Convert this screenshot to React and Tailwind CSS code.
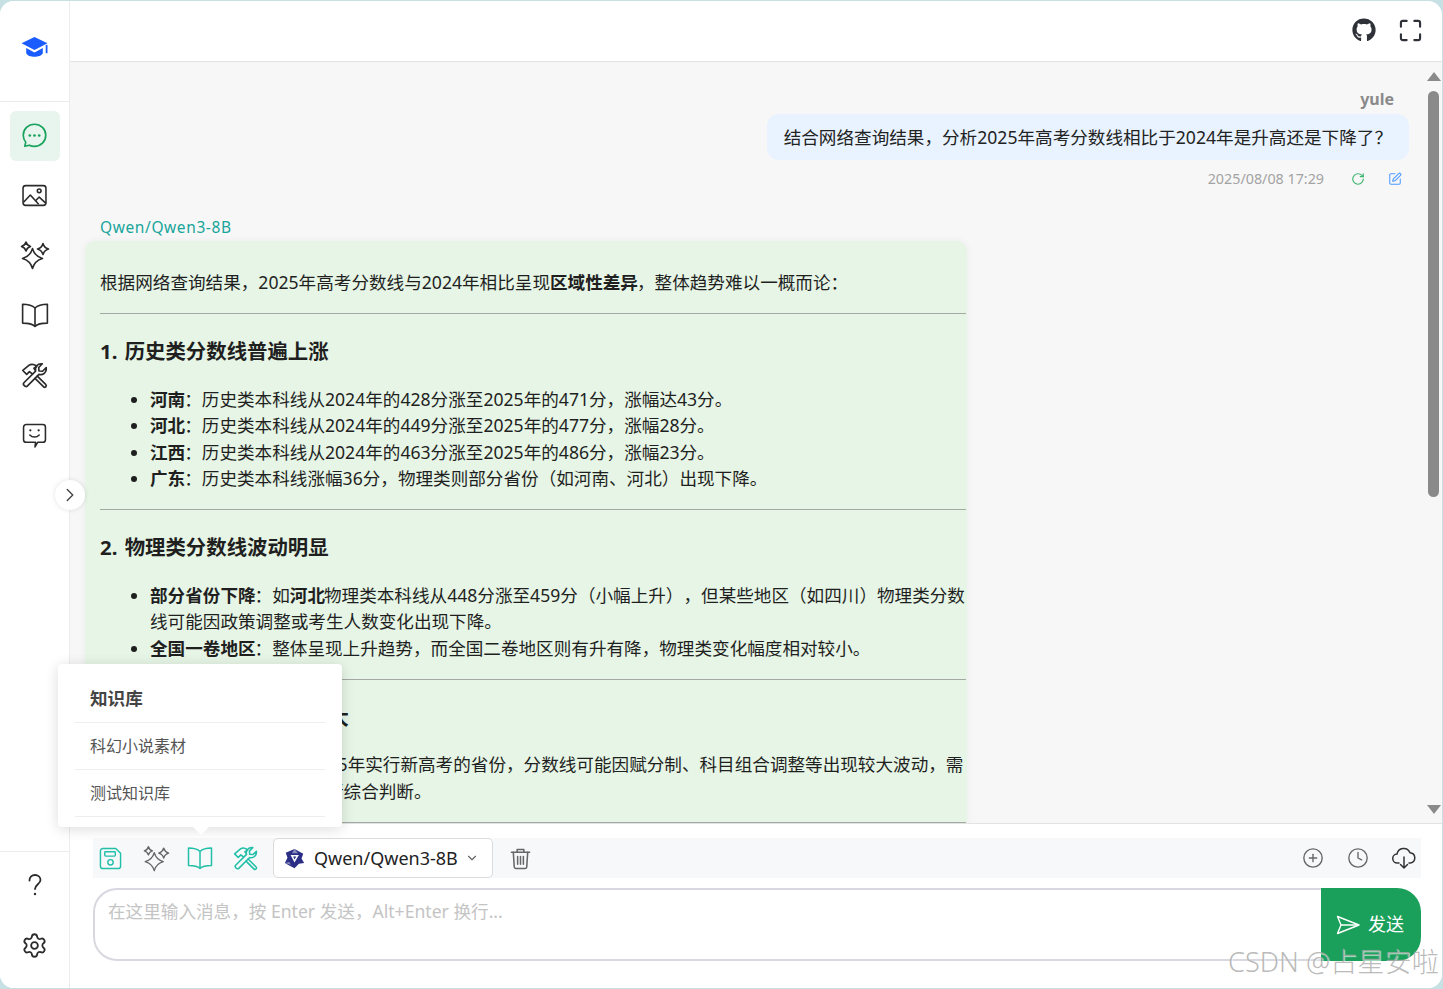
import React from 'react';
import { FaGithub } from 'react-icons/fa';
import { ChevronDown, ChevronRight, CirclePlus, Clock, RotateCw, Settings, SquarePen } from 'lucide-react';

const font = { fontFamily: '"Noto Sans", "Noto Sans CJK SC", sans-serif' };

function star(x, y, r) {
    const c = r * 0.22;
    return `M${x} ${y - r}Q${x + c} ${y - c} ${x + r} ${y}Q${x + c} ${y + c} ${x} ${y + r}Q${x - c} ${y + c} ${x - r} ${y}Q${x - c} ${y - c} ${x} ${y - r}Z`;
}

function CapIcon({ className }) {
    return (
        <svg viewBox="0 0 26 22" fill="currentColor" className={className}>
            <path d="M13 1 25.500 7 13 13.500.5 7z" />
            <path d="M5 11.500 13 15.800l8-4.300v5c-2 4.500-14 4.500-16 0z" />
            <rect x="23.800" y="8.500" width="1.700" height="8" />
        </svg>
    );
}

function ChatIcon({ className }) {
    return (
        <svg viewBox="0 0 24 24" fill="none" stroke="currentColor" strokeWidth="1.600" className={className}>
            <path d="M12 1.200c6 0 10.800 4.600 10.800 10.600S18 22.400 12 22.400c-1.800 0-3.500-.4-5-1.100l-4.300 1 .9-3.900A10.500 10.500 0 0 1 1.200 11.800C1.200 5.800 6 1.200 12 1.200z" strokeLinejoin="round" />
            <circle cx="7.500" cy="12" r="1.300" fill="currentColor" stroke="none" />
            <circle cx="12" cy="12" r="1.300" fill="currentColor" stroke="none" />
            <circle cx="16.500" cy="12" r="1.300" fill="currentColor" stroke="none" />
        </svg>
    );
}

function ImageIcon({ className }) {
    return (
        <svg viewBox="0 0 24 24" fill="none" stroke="currentColor" strokeWidth="1.500" strokeLinejoin="round" className={className}>
            <rect x="1" y="2.500" width="22" height="19" rx="2.500" />
            <path d="M1.500 18.500 8 11.500l8 9" />
            <path d="m13 17 3.500-3.500 6.500 6" />
            <circle cx="16.500" cy="7.500" r="1.800" />
        </svg>
    );
}

function SparkIcon({ className }) {
    return (
        <svg viewBox="0 0 30 30" fill="none" stroke="currentColor" strokeWidth="1.600" strokeLinejoin="round" className={className}>
            <path d={star(12.500, 18.500, 10)} />
            <path d={star(6, 6.500, 4.500)} />
            <path d={star(23, 9, 5.500)} />
        </svg>
    );
}

function BookIcon({ className }) {
    return (
        <svg viewBox="0 0 26 24" fill="none" stroke="currentColor" strokeWidth="1.500" strokeLinejoin="round" className={className}>
            <path d="M13 5.500C11 3.500 7.500 2 1.500 2v17.500c6 0 9.500 1 11.500 3 2-2 5.500-3 11.500-3V2C18.500 2 15 3.500 13 5.500z" />
            <path d="M13 5.500v17" />
        </svg>
    );
}

function ToolsIcon({ className }) {
    return (
        <svg viewBox="0 0 26 26" fill="none" stroke="currentColor" strokeWidth="1.500" strokeLinejoin="round" strokeLinecap="round" className={className}>
            <path d="M3.500 19.500 14 9C13 5.500 15.500 2 20 2.500l-3.200 3.300.2 3.200 3.200.2L23.500 6c.5 4.500-3 7-6.500 6L6.500 22.500c-1.500 1.500-4.500-1.500-3-3z" />
            <path d="M11 11.500 8.500 9.500 6 12 2.500 8.500 8.500 3.500c2-1 5-.5 6.500 1.500l-2.500 1.500L13.500 8" />
            <path d="M15.500 13.500 23 21c1.500 1.500-.5 3.500-2 2l-7.500-7.500" />
        </svg>
    );
}

function FeedbackIcon({ className }) {
    return (
        <svg viewBox="0 0 24 24" fill="none" stroke="currentColor" strokeWidth="1.500" strokeLinejoin="round" strokeLinecap="round" className={className}>
            <path d="M4 1.500h16A2.500 2.500 0 0 1 22.500 4v12a2.500 2.500 0 0 1-2.500 2.500h-5L12.500 23l.5-4.500H4A2.500 2.500 0 0 1 1.500 16V4A2.500 2.500 0 0 1 4 1.500z" />
            <path d="M7.500 11.500c2.500 2.700 6.500 2.700 9 0" />
            <circle cx="8" cy="7" r="1.100" fill="currentColor" stroke="none" />
            <circle cx="16" cy="7" r="1.100" fill="currentColor" stroke="none" />
        </svg>
    );
}

function QuestionIcon({ className }) {
    return (
        <svg viewBox="0 0 24 24" fill="none" stroke="currentColor" strokeWidth="1.800" strokeLinecap="round" className={className}>
            <path d="M6.500 7.500C6.500 4 9 2 12 2s5.500 2 5.500 5c0 4-5.500 4.500-5.500 9" />
            <circle cx="12" cy="21" r="1.200" fill="currentColor" stroke="none" />
        </svg>
    );
}

function FullscreenIcon({ className }) {
    return (
        <svg viewBox="0 0 24 24" fill="none" stroke="currentColor" strokeWidth="2.200" strokeLinecap="round" className={className}>
            <path d="M2 8V4a2 2 0 0 1 2-2h4M16 2h4a2 2 0 0 1 2 2v4M22 16v4a2 2 0 0 1-2 2h-4M8 22H4a2 2 0 0 1-2-2v-4" />
        </svg>
    );
}

function SaveIcon({ className }) {
    return (
        <svg viewBox="0 0 24 24" fill="none" stroke="currentColor" strokeWidth="1.500" strokeLinejoin="round" className={className}>
            <path d="M4 1.500h13.500l5 5V20a2.500 2.500 0 0 1-2.500 2.500H4A2.500 2.500 0 0 1 1.500 20V4A2.500 2.500 0 0 1 4 1.500z" />
            <rect x="6" y="5" width="11" height="4.500" rx=".8" />
            <circle cx="12" cy="16" r="2.800" />
        </svg>
    );
}

function TrashIcon({ className }) {
    return (
        <svg viewBox="0 0 24 24" fill="none" stroke="currentColor" strokeWidth="1.600" strokeLinecap="round" strokeLinejoin="round" className={className}>
            <path d="M2.500 5.500h19M8.500 5.500V2.500h7v3" />
            <path d="M4.500 5.500 5.500 21a1.800 1.800 0 0 0 1.800 1.500h9.400a1.800 1.800 0 0 0 1.800-1.500l1-15.500" />
            <path d="M9 10v8M12 10v8M15 10v8" />
        </svg>
    );
}

function CloudIcon({ className }) {
    return (
        <svg viewBox="0 0 24 24" fill="none" stroke="currentColor" strokeWidth="1.500" strokeLinecap="round" strokeLinejoin="round" className={className}>
            <path d="M7 17H5.500a4.500 4.500 0 0 1-.5-9 6.800 6.800 0 0 1 13-1.300A5.200 5.200 0 0 1 18.500 17H17" />
            <path d="M12 11v11M8.500 18.500 12 22l3.500-3.500" />
        </svg>
    );
}

function SendIcon({ className }) {
    return (
        <svg viewBox="0 0 24 24" fill="none" stroke="currentColor" strokeWidth="1.400" strokeLinejoin="round" className={className}>
            <path d="M1.500 3.500 23 12 1.500 20.500 5 12z" />
            <path d="M5 12h18" />
        </svg>
    );
}

function QwenLogo({ className }) {
    return (
        <svg viewBox="0 0 24 24" className={className}>
            <path d="M12 1 22 6.500 20 12l3 5-6 1-5 5-6-3-5-3 3-6-2-5.500z" fill="#2a2e85" />
            <path d="M7.500 8h9.500L12 16.500z" fill="#fff" />
            <path d="M10.500 9.800h3.500L12 13z" fill="#2a2e85" />
            <path d="M12 1 9 6h7zM1 17l5-1 2 3z" fill="#fff" opacity=".45" />
        </svg>
    );
}

function NavItem({ children, active }) {
    return (
        <div className={active
            ? 'w-[50px] h-[50px] pb-[2px] rounded-md bg-[#e8f4ee] text-[#1aa35d] flex items-center justify-center'
            : 'w-[50px] h-[50px] pb-[2px] rounded-md text-[#2b2b2b] flex items-center justify-center'}>
            {children}
        </div>
    );
}

function Bold({ children }) {
    return <strong className="font-bold mr-[-1px]">{children}</strong>;
}

function Item({ label, children }) {
    return (
        <li>
            <Bold>{label}</Bold>：{children}
        </li>
    );
}

function Section({ title, children }) {
    return (
        <>
            <hr className="border-0 h-px bg-[#a3a8a3]" />
            <h3 className="mt-[22px] h-[31px] text-[20.4px] leading-[31px] font-bold [word-spacing:2px]">{title}</h3>
            <ul className="mt-[18.6px] mb-[17.6px] pl-[50px] list-disc">{children}</ul>
        </>
    );
}

export default function App() {
    return (
        <div style={font} className="relative w-[1443px] h-[989px] overflow-hidden bg-[#c6e0e4] pt-px pr-px pb-px">
            <div className="flex h-full bg-white rounded-[14px] overflow-hidden">
                {/* sidebar */}
                <aside className="w-[70px] shrink-0 border-r border-[#ececec] flex flex-col items-center bg-white">
                    <div className="w-full h-[101px] border-b border-[#ececec] flex justify-center pt-[35px]">
                        <CapIcon className="w-[27px] h-[23px] text-[#1a5cff]" />
                    </div>
                    <nav className="flex flex-col items-center gap-[10px] pt-[9px]">
                        <NavItem active><ChatIcon className="w-[25px] h-[25px]" /></NavItem>
                        <NavItem><ImageIcon className="w-[25px] h-[25px]" /></NavItem>
                        <NavItem><SparkIcon className="w-[30px] h-[30px]" /></NavItem>
                        <NavItem><BookIcon className="w-[28px] h-[26px]" /></NavItem>
                        <NavItem><ToolsIcon className="w-[29px] h-[29px]" /></NavItem>
                        <NavItem><FeedbackIcon className="w-[25px] h-[25px]" /></NavItem>
                    </nav>
                    <div className="mt-auto w-full border-t border-[#ececec] flex flex-col items-center gap-[10px] pt-[9px] pb-[17px]">
                        <NavItem><QuestionIcon className="w-[24px] h-[24px]" /></NavItem>
                        <NavItem><Settings className="w-[27px] h-[27px]" strokeWidth={1.6} /></NavItem>
                    </div>
                </aside>

                <main className="flex-1 min-w-0 flex flex-col">
                    {/* top bar */}
                    <header className="h-[61px] shrink-0 border-b border-[#e3e3e3] flex items-center justify-end gap-[23px] pr-[20px] pb-[2px]">
                        <FaGithub className="w-[24px] h-[24px] text-[#2e3138]" />
                        <FullscreenIcon className="w-[23px] h-[23px] text-[#2e3138]" />
                    </header>

                    <div className="flex-1 min-h-0 flex bg-[#f7f7f7]">
                        {/* messages */}
                        <div className="flex-1 min-w-0 overflow-hidden [text-spacing-trim:space-all]">
                            <div className="pt-[27px] pr-[28px] text-right text-[16px] leading-[20px] font-bold text-[#8a8a8a]">yule</div>
                            <div className="mt-[5px] mr-[13px] flex justify-end">
                                <div className="h-[46px] px-[17px] rounded-xl bg-[#e8f3ff] text-[17.6px] leading-[46px] text-[#222]">
                                    结合网络查询结果，分析2025年高考分数线相比于2024年是升高还是下降了？
                                </div>
                            </div>
                            <div className="mt-[10px] h-[18px] flex items-center justify-end pr-[20px] text-[14.3px] text-[#a3a3a3]">
                                <span>2025/08/08 17:29</span>
                                <RotateCw className="ml-[27px] w-[14px] h-[14px] text-[#3cb46e]" strokeWidth={2} />
                                <SquarePen className="ml-[23px] w-[14px] h-[14px] text-[#4d9bff]" strokeWidth={1.8} />
                            </div>

                            <div className="mt-[30px] pl-[30px] h-[18px] text-[15.5px] leading-[18px] tracking-[0.6px] text-[#18a59a]">Qwen/Qwen3-8B</div>
                            <div className="mt-[5px] ml-[15px] w-[882px] pt-[28px] pl-[15px] pr-px rounded-t-[10px] bg-[#e6f5e5] shadow-[0_0_8px_rgba(0,0,0,0.05)] text-[17.6px] leading-[26.4px] text-[#1f1f1f]">
                                <p className="mb-[18px]">根据网络查询结果，2025年高考分数线与2024年相比呈现<Bold>区域性差异</Bold>，整体趋势难以一概而论：</p>
                                <Section title="1. 历史类分数线普遍上涨">
                                    <Item label="河南">历史类本科线从2024年的428分涨至2025年的471分，涨幅达43分。</Item>
                                    <Item label="河北">历史类本科线从2024年的449分涨至2025年的477分，涨幅28分。</Item>
                                    <Item label="江西">历史类本科线从2024年的463分涨至2025年的486分，涨幅23分。</Item>
                                    <Item label="广东">历史类本科线涨幅36分，物理类则部分省份（如河南、河北）出现下降。</Item>
                                </Section>
                                <Section title="2. 物理类分数线波动明显">
                                    <li><Bold>部分省份下降</Bold>：如<Bold>河北</Bold>物理类本科线从448分涨至459分（小幅上升），但某些地区（如四川）物理类分数线可能因政策调整或考生人数变化出现下降。</li>
                                    <Item label="全国一卷地区">整体呈现上升趋势，而全国二卷地区则有升有降，物理类变化幅度相对较小。</Item>
                                </Section>
                                <Section title="3. 新高考省份分数波动较大">
                                    <Item label="政策影响">部分省份2025年实行新高考的省份，分数线可能因赋分制、科目组合调整等出现较大波动，需要结合当地招生政策进行综合判断。</Item>
                                </Section>
                                <hr className="border-0 h-px bg-[#a3a8a3]" />
                                <div className="h-[60px]" />
                            </div>
                        </div>

                        {/* scrollbar */}
                        <div className="w-[20px] shrink-0 pl-[3px] bg-[#f7f7f7] flex flex-col items-center">
                            <div className="mt-[10px] w-0 h-0 border-x-[7px] border-b-[9px] border-x-transparent border-b-[#8a8a8a]" />
                            <div className="mt-[10px] w-[11px] h-[406px] rounded-full bg-[#8a8a8a]" />
                            <div className="mt-auto mb-[9px] w-0 h-0 border-x-[7px] border-t-[9px] border-x-transparent border-t-[#8a8a8a]" />
                        </div>
                    </div>

                    {/* composer */}
                    <div className="h-[165px] shrink-0 border-t border-[#e3e3e3] bg-white pt-[14px] pl-[23px] pr-[21px]">
                        <div className="h-[40px] bg-[#f7f8fa] flex items-center text-[#666]">
                            <div className="w-[45px] pl-[6px]"><SaveIcon className="w-[23px] h-[23px] text-[#22bfa9]" /></div>
                            <div className="w-[45px] pl-[5px]"><SparkIcon className="w-[27px] h-[27px]" /></div>
                            <div className="w-[45px] pl-[4px]"><BookIcon className="w-[26px] h-[24px] text-[#22bfa9]" /></div>
                            <div className="w-[45px] pl-[4px]"><ToolsIcon className="w-[27px] h-[27px] text-[#22bfa9]" /></div>
                            <div className="w-[220px] h-[40px] rounded-[5px] border border-[#dcdcdc] bg-white flex items-center pl-[10px]">
                                <QwenLogo className="w-[21px] h-[21px]" />
                                <span className="ml-[9px] text-[18px] text-[#222]">Qwen/Qwen3-8B</span>
                                <ChevronDown className="ml-[7px] w-[14px] h-[14px] text-[#666]" />
                            </div>
                            <TrashIcon className="ml-[16px] w-[23px] h-[25px]" />
                            <div className="ml-auto flex items-center gap-[23px] pr-[5px]">
                                <CirclePlus className="w-[22px] h-[22px]" strokeWidth={1.500} />
                                <Clock className="w-[22px] h-[22px]" strokeWidth={1.500} />
                                <CloudIcon className="w-[24px] h-[24px] text-[#333]" />
                            </div>
                        </div>
                        <div className="mt-[10px] h-[73px] flex">
                            <div className="flex-1 border-2 border-r-0 border-[#d8d8e0] rounded-l-[24px] pl-[13px] pt-[8px] text-[17.6px] leading-[26px] text-[#c4c4c4]">
                                在这里输入消息，按 Enter 发送，Alt+Enter 换行...
                            </div>
                            <div className="w-[100px] h-[73px] rounded-r-[24px] bg-[#1aa05a] text-white flex items-center justify-center gap-[8px] pr-[2px] text-[18px]">
                                <SendIcon className="w-[24px] h-[24px]" />
                                <span>发送</span>
                            </div>
                        </div>
                    </div>
                </main>
            </div>

            {/* sidebar toggle */}
            <div className="absolute left-[55px] top-[480px] w-[30px] h-[30px] rounded-full bg-white shadow-[0_0_5px_rgba(0,0,0,0.12)] flex items-center justify-center text-[#444]">
                <ChevronRight className="w-[22px] h-[22px]" strokeWidth={1.500} />
            </div>

            {/* knowledge base popup */}
            <div className="absolute left-[58px] top-[664px] w-[284px] h-[163px] rounded-[4px] bg-white shadow-[0_2px_14px_rgba(0,0,0,0.14)] px-[17px]">
                <div className="h-[59px] border-b border-[#eeeeee] pl-[15px] pt-[21px] text-[17.6px] leading-[26px] font-bold text-[#444]">知识库</div>
                <div className="h-[47px] border-b border-[#eeeeee] pl-[15px] text-[16px] leading-[47px] text-[#555]">科幻小说素材</div>
                <div className="h-[47px] border-b border-[#eeeeee] pl-[15px] text-[16px] leading-[47px] text-[#555]">测试知识库</div>
                <div className="absolute left-[135px] top-[163px] w-0 h-0 border-x-[8px] border-t-[8px] border-x-transparent border-t-white" />
            </div>

            {/* watermark */}
            <div className="absolute left-[1228px] top-[943px] text-[27.2px] leading-[38px] whitespace-nowrap font-light text-[#a8a8a8]/80 [text-shadow:1px_1px_1px_rgba(255,255,255,0.7)]">CSDN @占星安啦</div>
        </div>
    );
}
